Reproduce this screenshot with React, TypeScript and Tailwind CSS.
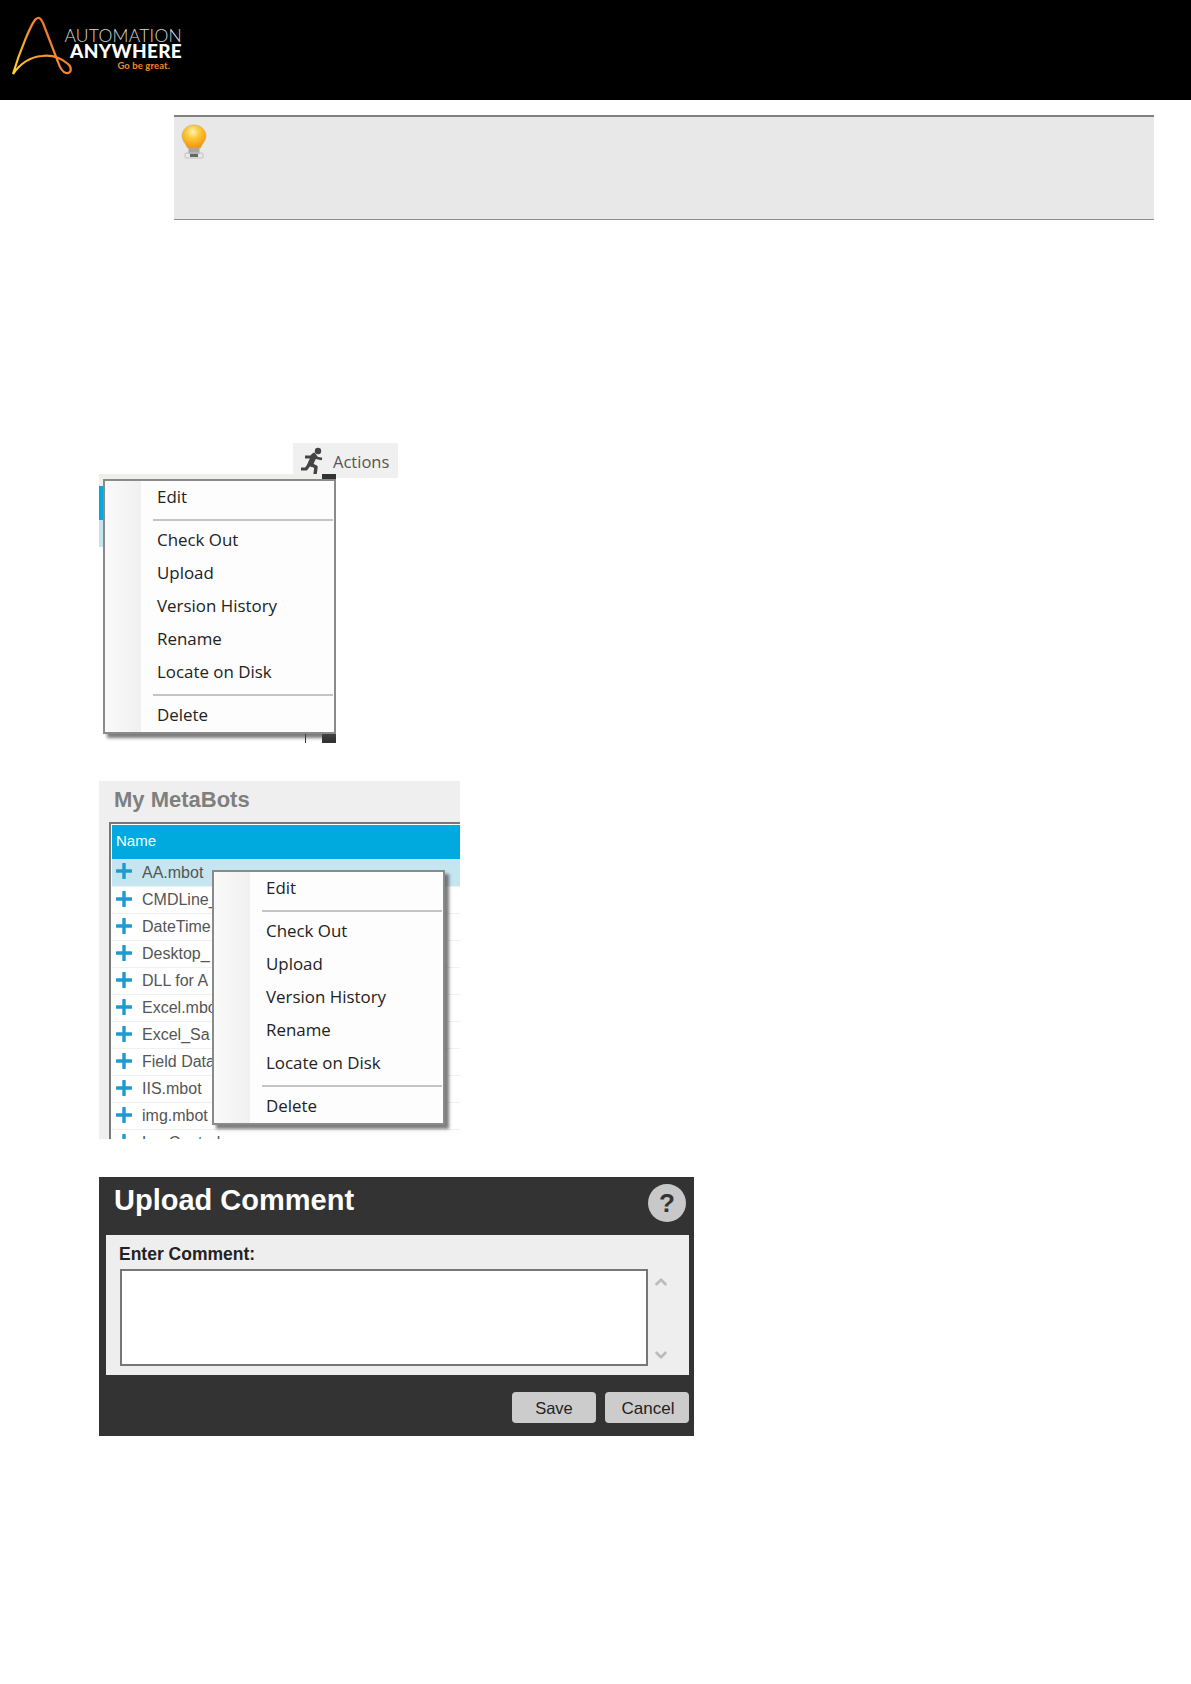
import React from 'react';
import { ChevronDown, ChevronUp } from 'lucide-react';

const Logo = () => (
  <div className="flex items-start">
    <svg width="64" height="62" viewBox="0 0 64 62" fill="none" className="mt-[15px] ml-[11px]">
      <defs>
        <linearGradient id="logoStroke" x1="0" y1="1" x2="1" y2="0.3">
          <stop offset="0" stopColor="#ffd52e" />
          <stop offset="0.45" stopColor="#f99d2c" />
          <stop offset="1" stopColor="#ee5f2c" />
        </linearGradient>
      </defs>
      <path
        d="M2 59 C 9 35, 21 7, 25 4 C 28 1, 30 4, 32 8 L 47 47 C 49 53 51 57 55 58 C 61 59, 61 52, 57 49 C 49 42, 39 40, 31 41 C 19 42, 9 49, 2 59"
        stroke="url(#logoStroke)"
        strokeWidth="2.2"
        strokeLinejoin="round"
      />
    </svg>
    <div className="mt-[28px] ml-[-11px] flex w-[118px] flex-col items-end font-['Lato',sans-serif] leading-none">
      <span className="text-[17.5px] leading-[15px] font-light tracking-[0.25px] text-[#d8d8d8]">AUTOMATION</span>
      <span className="text-[19px] leading-[16px] font-black tracking-[0.3px] text-white">ANYWHERE</span>
      <span className="mt-[2px] mr-[12px] text-[9.5px] leading-[9px] font-bold tracking-[0.1px] text-[#f0892b]">Go be great.</span>
    </div>
  </div>
);

const Bulb = () => (
  <svg width="26" height="35" viewBox="0 0 26 35" className="mt-[7px] ml-[7px]">
    <defs>
      <radialGradient id="bulbGlow" cx="0.45" cy="0.3" r="0.65">
        <stop offset="0" stopColor="#fff3b8" />
        <stop offset="0.45" stopColor="#fdc735" />
        <stop offset="1" stopColor="#f39a12" />
      </radialGradient>
    </defs>
    <path d="M13 1 C 5.500 1 1 6.500 1 12 C 1 17 5 19.500 6.500 24 L 19.500 24 C 21 19.500 25 17 25 12 C 25 6.500 20.500 1 13 1 Z" fill="url(#bulbGlow)" stroke="#c9a878" strokeWidth="0.6" />
    <rect x="7.500" y="24" width="11" height="6" fill="#a6a6a6" />
    <rect x="9" y="30" width="8" height="3" fill="#666" />
    <rect x="4" y="29" width="18" height="5" rx="1" fill="none" stroke="#c2c2c2" />
  </svg>
);

// running figure next to "Actions"
const Runner = () => (
  <svg width="24" height="28" viewBox="0 0 24 28" fill="none" stroke="#444" strokeLinejoin="round" className="shrink-0">
    <circle cx="17" cy="4" r="3.200" fill="#444" stroke="none" />
    <path d="M13.500 8 L8.500 19" strokeWidth="5.500" />
    <path d="M4 10 H10 L13 7 L16 11 L21 12" strokeWidth="2.800" />
    <path d="M8 18 L5 22 L0 22" strokeWidth="3.200" />
    <path d="M9 17 L15 20 L14 28" strokeWidth="3.400" />
  </svg>
);

const MenuItem = ({ label }: { label: string }) => (
  <div className="flex h-[33px] items-center pb-[3px] pl-[52px] text-[16.9px] text-[#222]">{label}</div>
);

const MenuSeparator = () => (
  <div className="flex h-[10px] items-center pr-[1px] pl-[48px]">
    <div className="h-[2px] w-full bg-[#c4c4c4]" />
  </div>
);

const ContextMenu = ({ className }: { className: string }) => (
  <div
    className={`h-[255px] w-[233px] overflow-hidden border-2 border-[#8a8a8a] bg-[#fdfdfd] pt-[1px] font-['Open_Sans',sans-serif] shadow-[4px_4px_3px_rgba(70,70,70,0.7)] ${className}`}
  >
    <div className="relative">
      <div className="absolute top-[-1px] left-0 h-[252px] w-[36px] bg-gradient-to-r from-[#fafafa] to-[#f0f0f0]" />
      <div className="relative">
        <MenuItem label="Edit" />
        <MenuSeparator />
        <MenuItem label="Check Out" />
        <MenuItem label="Upload" />
        <MenuItem label="Version History" />
        <MenuItem label="Rename" />
        <MenuItem label="Locate on Disk" />
        <MenuSeparator />
        <MenuItem label="Delete" />
      </div>
    </div>
  </div>
);

const PlusIcon = () => (
  <svg width="16" height="16" viewBox="0 0 16 16" className="mt-[-3px] shrink-0">
    <path d="M8 1 V15 M1 8 H15" stroke="#1d9bd1" strokeWidth="3.400" strokeLinecap="round" />
  </svg>
);

// names as far as they show beside the open menu
const metaBots = [
  'AA.mbot',
  'CMDLine_',
  'DateTime.',
  'Desktop_',
  'DLL for A',
  'Excel.mbo',
  'Excel_Sa',
  'Field Data',
  'IIS.mbot',
  'img.mbot',
  'LogControl',
];

const App = () => {
  return (
    <div className="min-h-[1684px] bg-white font-['Liberation_Sans',sans-serif]">
      <header className="h-[100px] bg-black">
        <Logo />
      </header>

      <div className="mt-[15px] ml-[174px] h-[105px] w-[980px] border-t-2 border-b border-t-[#808080] border-b-[#8c8c8c] bg-[#e8e8e8]">
        <Bulb />
      </div>

      <div className="mt-[223px] ml-[293px] flex h-[35px] w-[105px] items-center bg-[#f0f0f0] pl-[8px]">
        <Runner />
        <span className="mt-[3px] ml-[8px] font-['Open_Sans',sans-serif] text-[16.500px] text-[#555]">Actions</span>
      </div>

      {/* first menu, over the cropped list */}
      <div className="relative mt-[-4px] ml-[99px] h-[269px] w-[237px] overflow-hidden">
        <div className="h-[12px] w-[223px] bg-[#efefea]" />
        <div className="h-[34px] w-[4px] bg-[#00a9de]" />
        <div className="h-[27px] w-[4px] bg-[#c5e5f0]" />
        <div className="absolute top-0 right-0 h-[5px] w-[14px] bg-[#333]" />
        <div className="absolute right-0 bottom-0 h-[9px] w-[14px] bg-[#333]" />
        <div className="absolute right-[30px] bottom-0 h-[9px] w-[1px] bg-[#333]" />
        <ContextMenu className="absolute top-[5px] left-[4px]" />
      </div>

      <div className="relative mt-[38px] ml-[99px] h-[358px] w-[361px] overflow-hidden bg-[#efefef]">
        <div className="flex h-[41px] items-center pb-[4px] pl-[15px] text-[22px] font-bold text-[#7f7f7f]">My MetaBots</div>
        <div className="ml-[10px] h-[317px] border-t-2 border-l-2 border-[#777] bg-white pt-[1px] pl-[1px]">
          <div className="flex h-[34px] items-center bg-[#00a9de] pb-[1px] pl-[4px] text-[15px] text-white">Name</div>
          {metaBots.map((name, i) => (
            <div
              key={name}
              className={
                i === 0
                  ? 'flex h-[27px] items-center bg-[#c5e5f0] pl-[4px] text-[16px] text-[#555]'
                  : 'flex h-[27px] items-center border-t border-[#f0f0f0] pl-[4px] text-[16px] text-[#555]'
              }
            >
              <PlusIcon />
              <span className="ml-[10px] whitespace-nowrap">{name}</span>
            </div>
          ))}
        </div>
        <ContextMenu className="absolute top-[89px] left-[113px]" />
      </div>

      <div className="mt-[38px] ml-[99px] h-[259px] w-[595px] bg-[#333]">
        <div className="relative h-[58px] pt-[5px] pl-[15px] text-[29px] leading-[36px] font-bold text-white">
          Upload Comment
          <div className="absolute top-[7px] right-[8px] flex h-[38px] w-[38px] items-center justify-center rounded-full bg-[#c8c8c8] text-[26px] font-bold text-[#333]">
            ?
          </div>
        </div>
        <div className="ml-[7px] h-[140px] w-[583px] bg-[#eee] pt-[9px] pl-[14px]">
          <div className="ml-[-1px] text-[17.500px] leading-[20px] font-bold text-[#222]">Enter Comment:</div>
          <div className="mt-[5px] flex">
            <textarea className="h-[97px] w-[528px] resize-none border-2 border-[#777] bg-white" />
            <div className="ml-[4px] flex h-[99px] flex-col justify-between py-[4px] text-[#bbb]">
              <ChevronUp size={18} strokeWidth={3.500} />
              <ChevronDown size={18} strokeWidth={3.500} />
            </div>
          </div>
        </div>
        <div className="mt-[17px] mr-[5px] flex justify-end gap-[9px]">
          <button className="h-[31px] w-[84px] rounded-[4px] bg-[#ccc] pt-[2px] text-[16.500px] text-[#222]">Save</button>
          <button className="h-[31px] w-[84px] rounded-[4px] bg-[#ccc] pt-[2px] pl-[2px] text-[17px] text-[#222]">Cancel</button>
        </div>
      </div>
    </div>
  );
};

export default App;
